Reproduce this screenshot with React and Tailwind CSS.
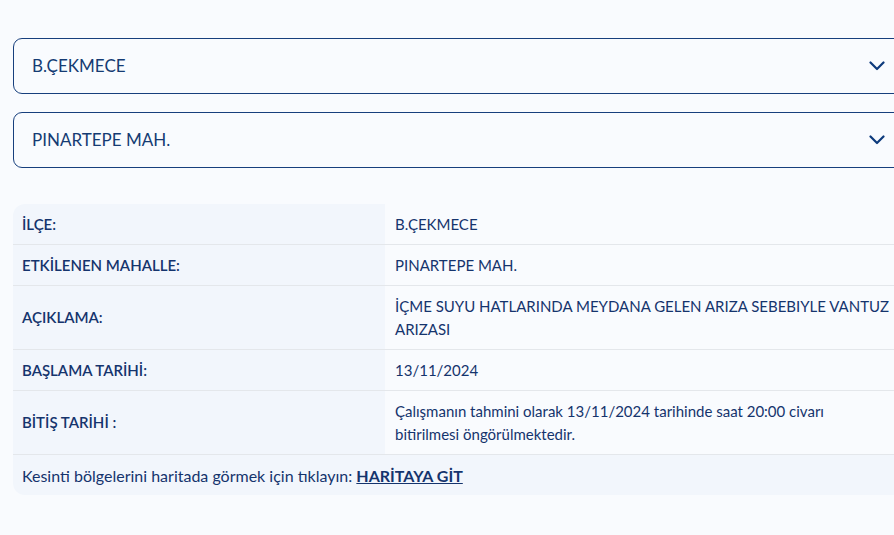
import { useState } from "react";

const rows = [
  { label: "İLÇE:", value: ["B.ÇEKMECE"] },
  { label: "ETKİLENEN MAHALLE:", value: ["PINARTEPE MAH."] },
  {
    label: "AÇIKLAMA:",
    value: ["İÇME SUYU HATLARINDA MEYDANA GELEN ARIZA SEBEBIYLE VANTUZ", "ARIZASI"],
  },
  { label: "BAŞLAMA TARİHİ:", value: ["13/11/2024"] },
  {
    label: "BİTİŞ TARİHİ :",
    value: ["Çalışmanın tahmini olarak 13/11/2024 tarihinde saat 20:00 civarı", "bitirilmesi öngörülmektedir."],
  },
];

function Chevron() {
  return (
    <svg width="16" height="10" viewBox="0 0 16 10" fill="none">
      <path d="M1.5 1.5 8 8l6.5-6.5" stroke="#0d3a7c" strokeWidth="2.2" strokeLinecap="round" strokeLinejoin="round" />
    </svg>
  );
}

function Select({ value }) {
  return (
    <button className="w-full h-[56px] flex items-center justify-between pl-[18px] pr-[17px] border border-[#173f7d] rounded-[9px] bg-[#f9fbfe] text-[17px] text-[#153b73] text-left">
      <span>{value}</span>
      <Chevron />
    </button>
  );
}

export default function App() {
  const [district] = useState("B.ÇEKMECE");
  const [hood] = useState("PINARTEPE MAH.");

  return (
    <div
      className="w-[894px] h-[535px] overflow-hidden bg-[#f9fbfe] text-[#15346d]"
      style={{ fontFamily: "Lato, 'Noto Sans', sans-serif" }}
    >
      <div className="w-[890px] ml-[13px] pt-[38px]">
        <div className="flex flex-col gap-[18px]">
          <Select value={district} />
          <Select value={hood} />
        </div>

        <div className="mt-[36px] rounded-l-[12px] overflow-hidden text-[15px] leading-[23px]">
          {rows.map((r) => (
            <div key={r.label} className="flex border-b border-[#e4e7eb]">
              <div className="w-[372px] shrink-0 bg-[#f2f6fc] px-[9px] py-[8.5px] flex items-center font-semibold">
                {r.label}
              </div>
              <div className="flex-1 px-[10px] py-[8.5px] whitespace-nowrap">
                {r.value.map((line) => (
                  <span key={line} className="block">
                    {line}
                  </span>
                ))}
              </div>
            </div>
          ))}
          <div className="bg-[#f2f6fc] px-[9px] py-[8.5px] text-[16px]">
            Kesinti bölgelerini haritada görmek için tıklayın:{" "}
            <a href="#" className="font-bold underline">
              HARİTAYA GİT
            </a>
          </div>
        </div>
      </div>
    </div>
  );
}
